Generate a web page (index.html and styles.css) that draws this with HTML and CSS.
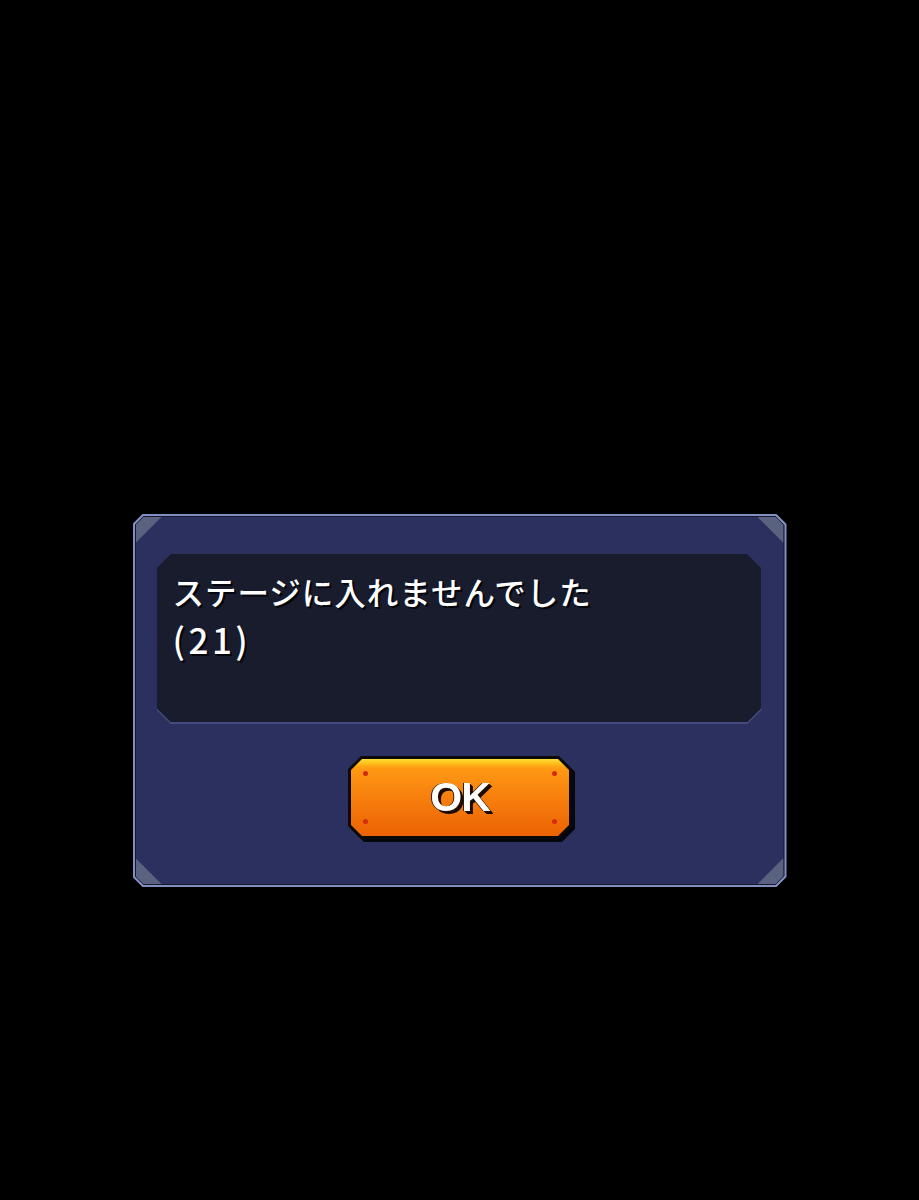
FILE: index.html
```html
<!DOCTYPE html>
<html lang="ja">
<head>
    <meta charset="UTF-8">
    <meta name="viewport" content="width=device-width, initial-scale=1.0">
    <link rel="stylesheet" href="styles.css">
    <title>エラー</title>
</head>
<body>
    <div class="pantalla">
        <div class="dialogo">
            <div class="dialogo-borde">
                <div class="dialogo-cuerpo">
                    <span class="esquina esq-ti"></span>
                    <span class="esquina esq-td"></span>
                    <span class="esquina esq-bi"></span>
                    <span class="esquina esq-bd"></span>

                    <div class="mensaje">
                        <div class="mensaje-fondo">
                            <p>ステージに入れませんでした<br><span class="codigo">(21)</span></p>
                        </div>
                    </div>

                    <div class="acciones">
                        <div class="boton-sombra">
                            <button class="boton">
                                <span class="boton-cara">
                                    <i class="punto p1"></i><i class="punto p2"></i>
                                    <i class="punto p3"></i><i class="punto p4"></i>
                                    OK
                                </span>
                            </button>
                        </div>
                    </div>
                </div>
            </div>
        </div>
    </div>
</body>
</html>
```

FILE: styles.css
```css
* {
    margin: 0;
    padding: 0;
    box-sizing: border-box;
}
body {
    background-color: #000;
    font-family: "Noto Sans CJK JP", "Noto Sans", sans-serif;
}
.pantalla {
    min-height: 1200px;
    display: flex;
    justify-content: center;
    padding-top: 514px;
}

/* marco del dialogo */
.dialogo {
    width: 654px;
    height: 373px;
    padding: 2px;
    background: #8290c0;
    clip-path: polygon(10px 0, calc(100% - 10px) 0, 100% 10px, 100% calc(100% - 10px), calc(100% - 10px) 100%, 10px 100%, 0 calc(100% - 10px), 0 10px);
}
.dialogo-borde {
    height: 100%;
    padding: 1px;
    background: #141830;
    clip-path: polygon(9px 0, calc(100% - 9px) 0, 100% 9px, 100% calc(100% - 9px), calc(100% - 9px) 100%, 9px 100%, 0 calc(100% - 9px), 0 9px);
}
.dialogo-cuerpo {
    position: relative;
    height: 100%;
    padding: 37px 22px 0 21px;
    background: #2b305e;
    clip-path: polygon(8px 0, calc(100% - 8px) 0, 100% 8px, 100% calc(100% - 8px), calc(100% - 8px) 100%, 8px 100%, 0 calc(100% - 8px), 0 8px);
}
.esquina {
    position: absolute;
    width: 26px;
    height: 26px;
    background: #5a6280;
}
.esq-ti { top: 0; left: 0; clip-path: polygon(0 0, 100% 0, 0 100%); }
.esq-td { top: 0; right: 0; clip-path: polygon(0 0, 100% 0, 100% 100%); }
.esq-bi { bottom: 0; left: 0; clip-path: polygon(0 0, 100% 100%, 0 100%); }
.esq-bd { bottom: 0; right: 0; clip-path: polygon(100% 0, 100% 100%, 0 100%); }

/* caja del mensaje */
.mensaje {
    height: 170px;
    padding-bottom: 2px;
    background: #454b7e;
    clip-path: polygon(14px 0, calc(100% - 14px) 0, 100% 14px, 100% calc(100% - 14px), calc(100% - 14px) 100%, 14px 100%, 0 calc(100% - 14px), 0 14px);
}
.mensaje-fondo {
    height: 100%;
    padding: 13px 16px;
    background: #181c2d;
    clip-path: polygon(14px 0, calc(100% - 14px) 0, 100% 14px, 100% calc(100% - 14px), calc(100% - 14px) 100%, 14px 100%, 0 calc(100% - 14px), 0 14px);
}
.mensaje p {
    color: #fff;
    font-size: 31.5px;
    font-weight: 500;
    line-height: 48px;
    letter-spacing: 1px;
    text-shadow: 2px 2px 0 #05060c, 1px 1px 0 #05060c;
}
.codigo {
    font-size: 35px;
    letter-spacing: 3.5px;
}

/* boton OK */
.acciones {
    display: flex;
    justify-content: center;
    padding-top: 32px;
    padding-left: 2px;
}
.boton-sombra {
    filter: drop-shadow(3px 3px 0 #05070f);
}
.boton {
    display: block;
    width: 224px;
    height: 83px;
    padding: 3px;
    border: none;
    background: #0c0a08;
    cursor: pointer;
    clip-path: polygon(13px 0, calc(100% - 13px) 0, 100% 13px, 100% calc(100% - 13px), calc(100% - 13px) 100%, 13px 100%, 0 calc(100% - 13px), 0 13px);
}
.boton-cara {
    position: relative;
    display: flex;
    justify-content: center;
    align-items: center;
    height: 100%;
    background: linear-gradient(#ffdf3a 0, #ffc21c 4px, #ff9a14 9px, #f8820e 45%, #ec6204 100%);
    clip-path: polygon(11px 0, calc(100% - 11px) 0, 100% 11px, 100% calc(100% - 11px), calc(100% - 11px) 100%, 11px 100%, 0 calc(100% - 11px), 0 11px);
    color: #fff;
    font-family: "Liberation Sans", Arial, sans-serif;
    font-size: 41px;
    font-weight: bold;
    letter-spacing: -1px;
    text-shadow: 1px 1px 0 #2a1200, 2px 2px 0 #1a0a00, 3px 3px 0 #1a0a00, -1px 0 0 #3a1a00;
}
.punto {
    position: absolute;
    width: 5px;
    height: 5px;
    border-radius: 50%;
    background: #d42a12;
}
.p1 { top: 12px; left: 12px; }
.p2 { top: 12px; right: 12px; }
.p3 { bottom: 12px; left: 12px; }
.p4 { bottom: 12px; right: 12px; }
```
